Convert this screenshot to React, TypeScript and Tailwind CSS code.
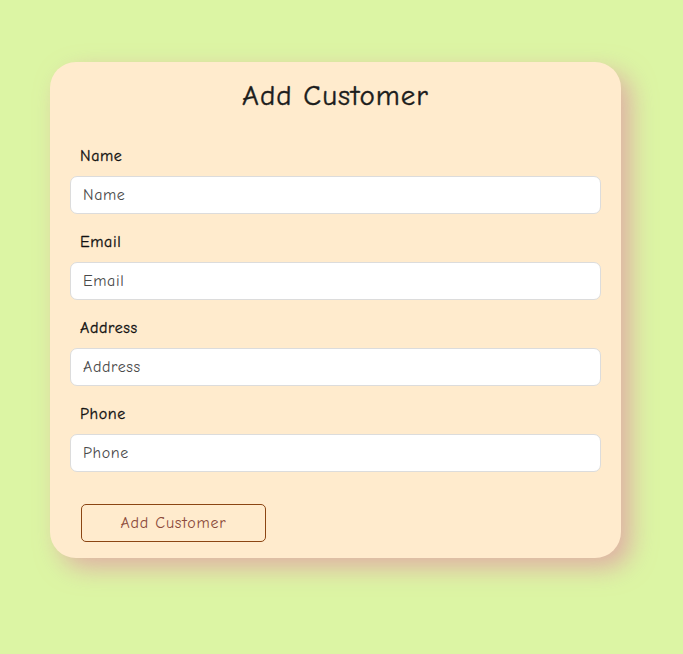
import React from "react";

const fields = ["Name", "Email", "Address", "Phone"];

export default function App() {
  return (
    <div
      className="min-h-[654px] w-full bg-[#dcf5a4] pt-[62px] pl-[50px]"
      style={{ fontFamily: '"Comic Sans MS", "Comic Neue", "Open Sans", sans-serif' }}
    >
      <div className="w-[571px] h-[496px] rounded-[26px] bg-[#ffebcd] px-[20px] pt-[14px] shadow-[10px_10px_24px_rgba(225,130,165,0.6)]">
        <h2 className="h-[40px] text-center text-[29px] leading-[40px] tracking-[1px] text-[#1c1c1c] [-webkit-text-stroke:0.4px_#1c1c1c]">
          Add Customer
        </h2>
        <div className="mt-[28px] flex flex-col gap-[16px]">
          {fields.map((f) => (
            <div key={f} className="flex flex-col gap-[8px]">
              <label className="h-[24px] pl-[10px] text-[16px] leading-[24px] tracking-[0.6px] text-[#111] [-webkit-text-stroke:0.3px_#111]">
                {f}
              </label>
              <input
                placeholder={f}
                className="h-[38px] w-full rounded-[7px] border border-[#dcdcdc] bg-white px-[12px] text-[16px] tracking-[0.6px] text-[#333] placeholder:text-[#4a4a4a] outline-none"
              />
            </div>
          ))}
        </div>
        <button className="mt-[32px] ml-[11px] h-[38px] w-[185px] rounded-[5px] border border-[#8b4513] bg-transparent text-[16px] tracking-[0.8px] text-[#8b4a3a]">
          Add Customer
        </button>
      </div>
    </div>
  );
}
